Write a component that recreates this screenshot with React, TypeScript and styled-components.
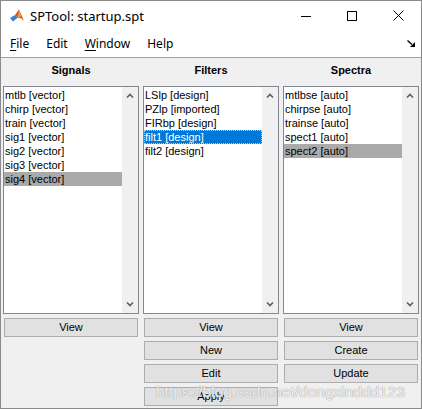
import React from 'react'
import styled, { createGlobalStyle } from 'styled-components'

const GlobalStyle = createGlobalStyle`
  html, body {
    margin: 0;
    padding: 0;
    background: #ffffff;
  }
  * {
    box-sizing: border-box;
  }
`

const Frame = styled.div`
  position: relative;
  width: 422px;
  height: 409px;
  border: 1px solid #8a8a8a;
  background: #f0f0f0;
  display: flex;
  flex-direction: column;
  overflow: hidden;
`

const TitleBar = styled.div`
  height: 29px;
  background: #ffffff;
  display: flex;
  align-items: center;
  padding-left: 8px;
  font-family: "Noto Sans", "Open Sans", sans-serif;
  font-size: 13px;
  color: #000;
`

const TitleText = styled.span`
  margin-left: 5px;
  flex: 1;
`

const CaptionButton = styled.div`
  width: 46px;
  height: 29px;
  display: flex;
  align-items: center;
  justify-content: center;
`

const MenuBar = styled.div`
  height: 28px;
  background: #ffffff;
  border-bottom: 1px solid #a0a0a0;
  display: flex;
  align-items: center;
  gap: 17px;
  padding: 0 6px 0 9px;
  font-family: "Noto Sans", "Open Sans", sans-serif;
  font-size: 12px;
  color: #000;
`

const MenuItem = styled.span`
  u {
    text-decoration: underline;
    text-underline-offset: 2px;
  }
`

const MenuSpacer = styled.div`
  flex: 1;
`

const Body = styled.div`
  display: grid;
  grid-template-columns: 136px 136px 136px;
  column-gap: 4px;
  padding: 5px 0 0 2px;
  font-family: "Liberation Sans", Arial, sans-serif;
  font-size: 11px;
  color: #000;
`

const Column = styled.div`
  display: flex;
  flex-direction: column;
`

const Heading = styled.div`
  height: 14px;
  line-height: 14px;
  text-align: center;
  font-weight: bold;
  margin-bottom: 9px;
`

const ListBox = styled.div`
  height: 228px;
  border: 1px solid #828790;
  background: #ffffff;
  display: flex;
`

const Items = styled.div`
  flex: 1;
  padding-top: 1px;
`

const Row = styled.div<{ $sel?: 'gray' | 'blue' }>`
  height: 14px;
  line-height: 14px;
  padding-left: 1px;
  white-space: nowrap;
  background: ${p => (p.$sel === 'gray' ? '#aaaaaa' : p.$sel === 'blue' ? '#0078d7' : 'transparent')};
  color: ${p => (p.$sel === 'blue' ? '#ffffff' : '#000000')};
  outline: ${p => (p.$sel === 'blue' ? '1px dotted #f3c27a' : 'none')};
  outline-offset: -1px;
`

const ScrollBar = styled.div`
  width: 16px;
  background: #f0f0f0;
  display: flex;
  flex-direction: column;
  justify-content: space-between;
`

const Arrow = styled.div`
  height: 17px;
  display: flex;
  align-items: center;
  justify-content: center;
`

const Buttons = styled.div`
  display: flex;
  flex-direction: column;
  gap: 4px;
  margin-top: 4px;
  padding: 0 1px;
`

const Button = styled.div`
  height: 19px;
  line-height: 17px;
  text-align: center;
  background: #e1e1e1;
  border: 1px solid #adadad;
`

const Watermark = styled.div`
  position: absolute;
  left: 155px;
  top: 382px;
  font-family: "Liberation Sans", Arial, sans-serif;
  font-size: 15.5px;
  color: rgba(255, 255, 255, 0.85);
  text-shadow: 0 0 1px #a0a0a0, 0 0 1px #a0a0a0;
  pointer-events: none;
  white-space: nowrap;
`

function MatlabIcon() {
  return (
    <svg width="16" height="16" viewBox="0 0 16 16">
      <polygon points="1,10 6,7 9,9.5 4,13.5" fill="#3f7fc9" />
      <polygon points="6,7 10,1.5 15,13 12.5,10.5 9,9.5" fill="#d9541e" />
      <polygon points="10,1.5 12,8.5 9,9.5" fill="#f2a43a" />
    </svg>
  )
}

function Chevron({ up }: { up?: boolean }) {
  return (
    <svg width="8" height="5" viewBox="0 0 8 5">
      <polyline
        points={up ? '1,4.5 4,1.5 7,4.5' : '1,0.5 4,3.5 7,0.5'}
        fill="none"
        stroke="#606060"
        strokeWidth="1.6"
      />
    </svg>
  )
}

type Item = { label: string; sel?: 'gray' | 'blue' }

function Panel({ title, items, buttons }: { title: string; items: Item[]; buttons: string[] }) {
  return (
    <Column>
      <Heading>{title}</Heading>
      <ListBox>
        <Items>
          {items.map(it => (
            <Row key={it.label} $sel={it.sel}>
              {it.label}
            </Row>
          ))}
        </Items>
        <ScrollBar>
          <Arrow>
            <Chevron up />
          </Arrow>
          <Arrow>
            <Chevron />
          </Arrow>
        </ScrollBar>
      </ListBox>
      <Buttons>
        {buttons.map(b => (
          <Button key={b}>{b}</Button>
        ))}
      </Buttons>
    </Column>
  )
}

const signals: Item[] = [
  { label: 'mtlb [vector]' },
  { label: 'chirp [vector]' },
  { label: 'train [vector]' },
  { label: 'sig1 [vector]' },
  { label: 'sig2 [vector]' },
  { label: 'sig3 [vector]' },
  { label: 'sig4 [vector]', sel: 'gray' },
]

const filters: Item[] = [
  { label: 'LSlp [design]' },
  { label: 'PZlp [imported]' },
  { label: 'FIRbp [design]' },
  { label: 'filt1 [design]', sel: 'blue' },
  { label: 'filt2 [design]' },
]

const spectra: Item[] = [
  { label: 'mtlbse [auto]' },
  { label: 'chirpse [auto]' },
  { label: 'trainse [auto]' },
  { label: 'spect1 [auto]' },
  { label: 'spect2 [auto]', sel: 'gray' },
]

export default function App() {
  return (
    <>
      <GlobalStyle />
      <Frame>
        <TitleBar>
          <MatlabIcon />
          <TitleText>SPTool: startup.spt</TitleText>
          <CaptionButton>
            <svg width="10" height="10" viewBox="0 0 10 10">
              <line x1="0" y1="5.5" x2="10" y2="5.5" stroke="#000" strokeWidth="1" />
            </svg>
          </CaptionButton>
          <CaptionButton>
            <svg width="10" height="10" viewBox="0 0 10 10">
              <rect x="0.5" y="0.5" width="9" height="9" fill="none" stroke="#000" strokeWidth="1" />
            </svg>
          </CaptionButton>
          <CaptionButton>
            <svg width="11" height="11" viewBox="0 0 11 11">
              <line x1="0.5" y1="0.5" x2="10.5" y2="10.5" stroke="#000" strokeWidth="1" />
              <line x1="10.5" y1="0.5" x2="0.5" y2="10.5" stroke="#000" strokeWidth="1" />
            </svg>
          </CaptionButton>
        </TitleBar>
        <MenuBar>
          <MenuItem>
            <u>F</u>ile
          </MenuItem>
          <MenuItem>Edit</MenuItem>
          <MenuItem>
            <u>W</u>indow
          </MenuItem>
          <MenuItem>Help</MenuItem>
          <MenuSpacer />
          <svg width="8" height="7" viewBox="0 0 8 7">
            <line x1="0.5" y1="0.5" x2="5" y2="4.5" stroke="#000" strokeWidth="1.3" />
            <polygon points="8,2 8,7 3,7" fill="#000" />
          </svg>
        </MenuBar>
        <Body>
          <Panel title="Signals" items={signals} buttons={['View']} />
          <Panel title="Filters" items={filters} buttons={['View', 'New', 'Edit', 'Apply']} />
          <Panel title="Spectra" items={spectra} buttons={['View', 'Create', 'Update']} />
        </Body>
        <Watermark>https://blog.csdn.net/dongxinddd123</Watermark>
      </Frame>
    </>
  )
}
